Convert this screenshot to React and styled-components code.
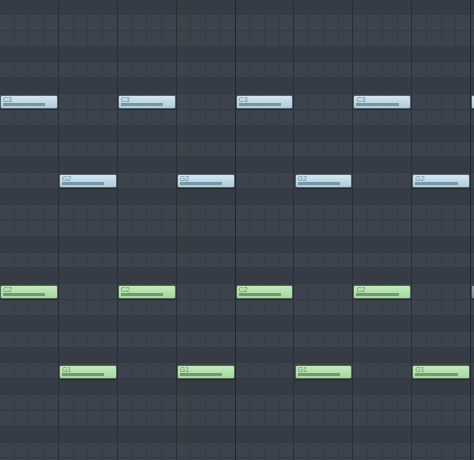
import styled, { createGlobalStyle } from "styled-components";

const ROW_H = 15.85;
const BEAT_W = 58.9;
const STEP_W = BEAT_W / 4;
const TOP_OFFSET = -1;

// rows from the top of the view (F#3) down to D1
const ROW_COUNT = 29;
const BLACK = [0, 3, 5, 8, 10, 12, 15, 17, 20, 22, 24, 27];

const Global = createGlobalStyle`
    html, body {
        margin: 0;
        padding: 0;
        background: #3c424c;
    }
    body {
        font-family: "Liberation Sans", Arial, sans-serif;
    }
`;

const Roll = styled.div`
    position: relative;
    width: 474px;
    height: 460px;
    overflow: hidden;
    background: #3c424c;
`;

const Rows = styled.div`
    display: flex;
    flex-direction: column;
    margin-top: ${TOP_OFFSET}px;
`;

const KeyRow = styled.div`
    height: ${ROW_H}px;
    flex-shrink: 0;
    box-sizing: border-box;
    background: ${p => (p.$black ? "#363c45" : "#3d434d")};
    border-bottom: 1px solid #353a42;
`;

const GridLines = styled.div`
    position: absolute;
    inset: 0;
    pointer-events: none;
    background-image:
        repeating-linear-gradient(to right, transparent 0, transparent ${BEAT_W * 4 - 1}px, #23272d ${BEAT_W * 4 - 1}px, #23272d ${BEAT_W * 4}px),
        repeating-linear-gradient(to right, transparent 0, transparent ${BEAT_W - 1}px, #2a2f36 ${BEAT_W - 1}px, #2a2f36 ${BEAT_W}px),
        repeating-linear-gradient(to right, transparent 0, transparent ${STEP_W - 1}px, #373c44 ${STEP_W - 1}px, #373c44 ${STEP_W}px);
`;

const fills = {
    blue: { bg: "linear-gradient(#d2e6ef, #aecbd8)", line: "#4f6470", text: "#6f8a98", bar: "#7596a5" },
    green: { bg: "linear-gradient(#c2eabd, #a6d6a1)", line: "#4f6b4e", text: "#6b8f68", bar: "#6f9c6c" },
    grey: { bg: "linear-gradient(#9aa0a6, #7f858c)", line: "#4a4f55", text: "#5d6268", bar: "#63686e" },
};

const Note = styled.div`
    position: absolute;
    box-sizing: border-box;
    height: 14px;
    border-radius: 2px;
    border: 1px solid ${p => fills[p.$tone].line};
    background: ${p => fills[p.$tone].bg};
    box-shadow: 0 1px 1px rgba(0, 0, 0, 0.35);
`;

const Label = styled.span`
    position: absolute;
    left: 2px;
    top: 0px;
    font-size: 7px;
    line-height: 8px;
    color: ${p => fills[p.$tone].text};
`;

const Velocity = styled.div`
    position: absolute;
    left: 2px;
    bottom: 2px;
    width: 76%;
    height: 3px;
    background: ${p => fills[p.$tone].bar};
`;

const notes = [];
for (let beat = 0; beat < 9; beat++) {
    const even = beat % 2 === 0;
    notes.push({ beat, key: even ? "C3" : "G2", row: even ? 6 : 11, tone: "blue" });
    notes.push({
        beat,
        key: even ? "C2" : "G1",
        row: even ? 18 : 23,
        tone: beat === 8 ? "grey" : "green",
    });
}

const App = () => {
    return (
        <Roll>
            <Global />
            <Rows>
                {Array.from({ length: ROW_COUNT }, (_, i) => (
                    <KeyRow key={i} $black={BLACK.includes(i)} />
                ))}
            </Rows>
            <GridLines />
            {notes.map((n, i) => (
                <Note
                    key={i}
                    $tone={n.tone}
                    style={{
                        left: n.beat * BEAT_W,
                        top: TOP_OFFSET + n.row * ROW_H + 1,
                        width: BEAT_W - 1,
                    }}
                >
                    {n.beat < 8 && <Label $tone={n.tone}>{n.key}</Label>}
                    <Velocity $tone={n.tone} />
                </Note>
            ))}
        </Roll>
    );
};

export default App;
